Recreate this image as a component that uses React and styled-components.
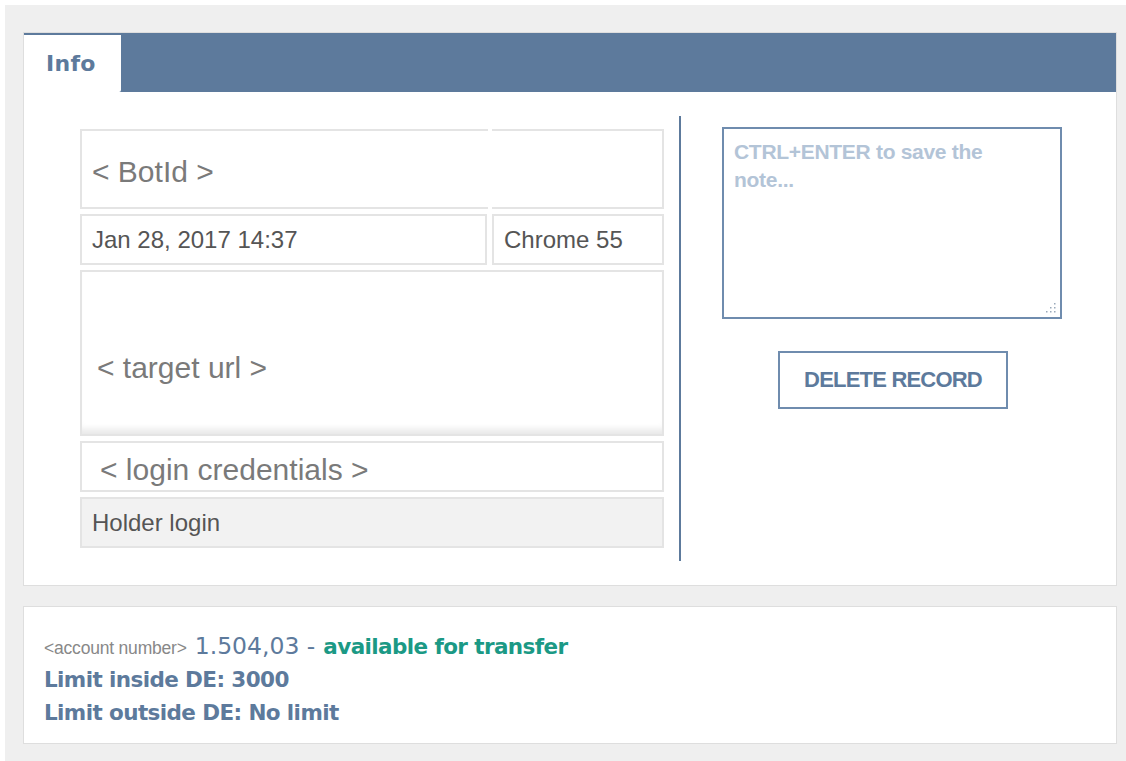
import React from 'react';
import styled, { createGlobalStyle } from 'styled-components';

const GlobalStyle = createGlobalStyle`
  html, body {
    margin: 0;
    padding: 0;
    background: #ffffff;
  }
  body {
    font-family: 'Liberation Sans', Arial, sans-serif;
  }
`;

const accent = '#5d7a9c';
const cellBorder = '#e4e4e4';

const Page = styled.div`
  margin: 5px 0 0 5px;
  min-height: 756px;
  box-sizing: border-box;
  background: #efefef;
  padding: 27px 9px 16px 18px;
  display: flex;
  flex-direction: column;
  gap: 20px;
`;

const Panel = styled.div`
  background: #fff;
  border: 1px solid #dedede;
`;

const TabBar = styled.div`
  height: 59px;
  background: ${accent};
  display: flex;
  align-items: flex-end;
`;

const Tab = styled.div`
  width: 97px;
  height: 57px;
  background: #fff;
  border-bottom-right-radius: 2px;
  box-sizing: border-box;
  padding: 16px 0 0 22px;
  font-family: 'DejaVu Sans', Verdana, sans-serif;
  font-weight: bold;
  font-size: 22px;
  letter-spacing: 0.3px;
  color: ${accent};
`;

const Body = styled.div`
  display: flex;
  padding: 24px 0 24px 56px;
`;

const Fields = styled.div`
  width: 584px;
  margin: 13px 0 13px;
  display: flex;
  flex-direction: column;
  gap: 5px;
`;

const Row = styled.div`
  display: flex;
  gap: ${(p) => (p.$split ? '4px' : '5px')};
`;

const Cell = styled.div`
  box-sizing: border-box;
  height: ${(p) => p.$h}px;
  flex: ${(p) => (p.$w ? `0 0 ${p.$w}px` : p.$fill ? '1 1 0' : 'none')};
  border: 2px solid ${cellBorder};
  background: ${(p) => (p.$muted ? '#f2f2f2' : '#fff')};
  display: flex;
  align-items: center;
  padding-left: ${(p) => p.$pad || 10}px;
  padding-top: ${(p) => p.$top || 0}px;
  color: ${(p) => (p.$big ? '#7a7a7a' : '#555')};
  font-size: ${(p) => (p.$big ? 30 : 24)}px;
  white-space: nowrap;
  overflow: hidden;
`;

const IdCell = styled(Cell)`
  border-left-width: ${(p) => (p.$side === 'right' ? 0 : 2)}px;
  border-right-width: ${(p) => (p.$side === 'left' ? 0 : 2)}px;
`;

const UrlCell = styled(Cell)`
  box-shadow: inset 0 -9px 6px -4px #e9e9e9;
`;

const Divider = styled.div`
  width: 2px;
  background: ${accent};
  margin-left: 15px;
`;

const Side = styled.div`
  flex: 1;
  padding: 11px 0 0 41px;
  display: flex;
  flex-direction: column;
  align-items: flex-start;
`;

const NoteBox = styled.div`
  position: relative;
  width: 340px;
  height: 192px;
`;

const Note = styled.textarea`
  display: block;
  box-sizing: border-box;
  width: 100%;
  height: 100%;
  border: 2px solid #6f8cae;
  border-radius: 0;
  padding: 9px 30px 7px 10px;
  resize: none;
  font-family: 'Liberation Sans', Arial, sans-serif;
  font-weight: bold;
  font-size: 21px;
  letter-spacing: -0.3px;
  line-height: 28px;
  color: ${accent};
  outline: none;
  &::placeholder {
    color: #b3c4d7;
  }
`;

// dotted grip in the corner of the note field
const Grip = styled.svg`
  position: absolute;
  right: 5px;
  bottom: 5px;
  width: 12px;
  height: 12px;
  pointer-events: none;
`;

const DeleteButton = styled.button`
  margin: 32px 0 0 56px;
  width: 230px;
  height: 58px;
  background: #fff;
  border: 2px solid #6f8cae;
  border-radius: 0;
  color: ${accent};
  font-family: 'Liberation Sans', Arial, sans-serif;
  font-weight: bold;
  font-size: 22px;
  letter-spacing: -0.8px;
  padding: 0;
  cursor: pointer;
`;

const Summary = styled(Panel)`
  height: 138px;
  box-sizing: border-box;
  padding: 23px 20px 0;
  font-family: 'DejaVu Sans', Verdana, sans-serif;
  font-size: 21.5px;
  letter-spacing: -0.6px;
  line-height: 33px;
  color: ${accent};
`;

const Line = styled.div`
  font-weight: ${(p) => (p.$bold ? 'bold' : 'normal')};
  white-space: nowrap;
`;

const Small = styled.span`
  font-family: 'Liberation Sans', Arial, sans-serif;
  font-size: 17.5px;
  letter-spacing: -0.2px;
  line-height: 1;
  color: #888;
  margin-right: 8px;
`;

const Amount = styled.span`
  font-size: 23.5px;
  letter-spacing: 0;
  margin-right: 8px;
`;

const Teal = styled.span`
  color: #1b9985;
  font-weight: bold;
`;

const gripDots = [
  [10, 2],
  [6, 6],
  [10, 6],
  [2, 10],
  [6, 10],
  [10, 10],
];

export default function App() {
  return (
    <>
      <GlobalStyle />
      <Page>
        <Panel>
          <TabBar>
            <Tab>Info</Tab>
          </TabBar>
          <Body>
            <Fields>
              <Row $split>
                <IdCell $h={80} $w={408} $side='left' $big $top={6}>
                  &lt; BotId &gt;
                </IdCell>
                <IdCell $h={80} $fill $side='right' />
              </Row>
              <Row>
                <Cell $h={51} $w={407}>Jan 28, 2017 14:37</Cell>
                <Cell $h={51} $fill>Chrome 55</Cell>
              </Row>
              <UrlCell $h={166} $big $pad={15} $top={30}>
                &lt; target url &gt;
              </UrlCell>
              <Cell $h={51} $big $pad={18} $top={6}>
                &lt; login credentials &gt;
              </Cell>
              <Cell $h={51} $muted>
                Holder login
              </Cell>
            </Fields>
            <Divider />
            <Side>
              <NoteBox>
                <Note placeholder='CTRL+ENTER to save the note...' />
                <Grip viewBox='0 0 12 12'>
                  {gripDots.map(([x, y]) => (
                    <rect key={`${x}-${y}`} x={x - 1} y={y - 1} width='1.5' height='1.5' fill='#9aa9ba' />
                  ))}
                </Grip>
              </NoteBox>
              <DeleteButton>DELETE RECORD</DeleteButton>
            </Side>
          </Body>
        </Panel>
        <Summary>
          <Line>
            <Small>&lt;account number&gt;</Small>
            <Amount>1.504,03 -</Amount>
            <Teal>available for transfer</Teal>
          </Line>
          <Line $bold>Limit inside DE: 3000</Line>
          <Line $bold>Limit outside DE: No limit</Line>
        </Summary>
      </Page>
    </>
  );
}
